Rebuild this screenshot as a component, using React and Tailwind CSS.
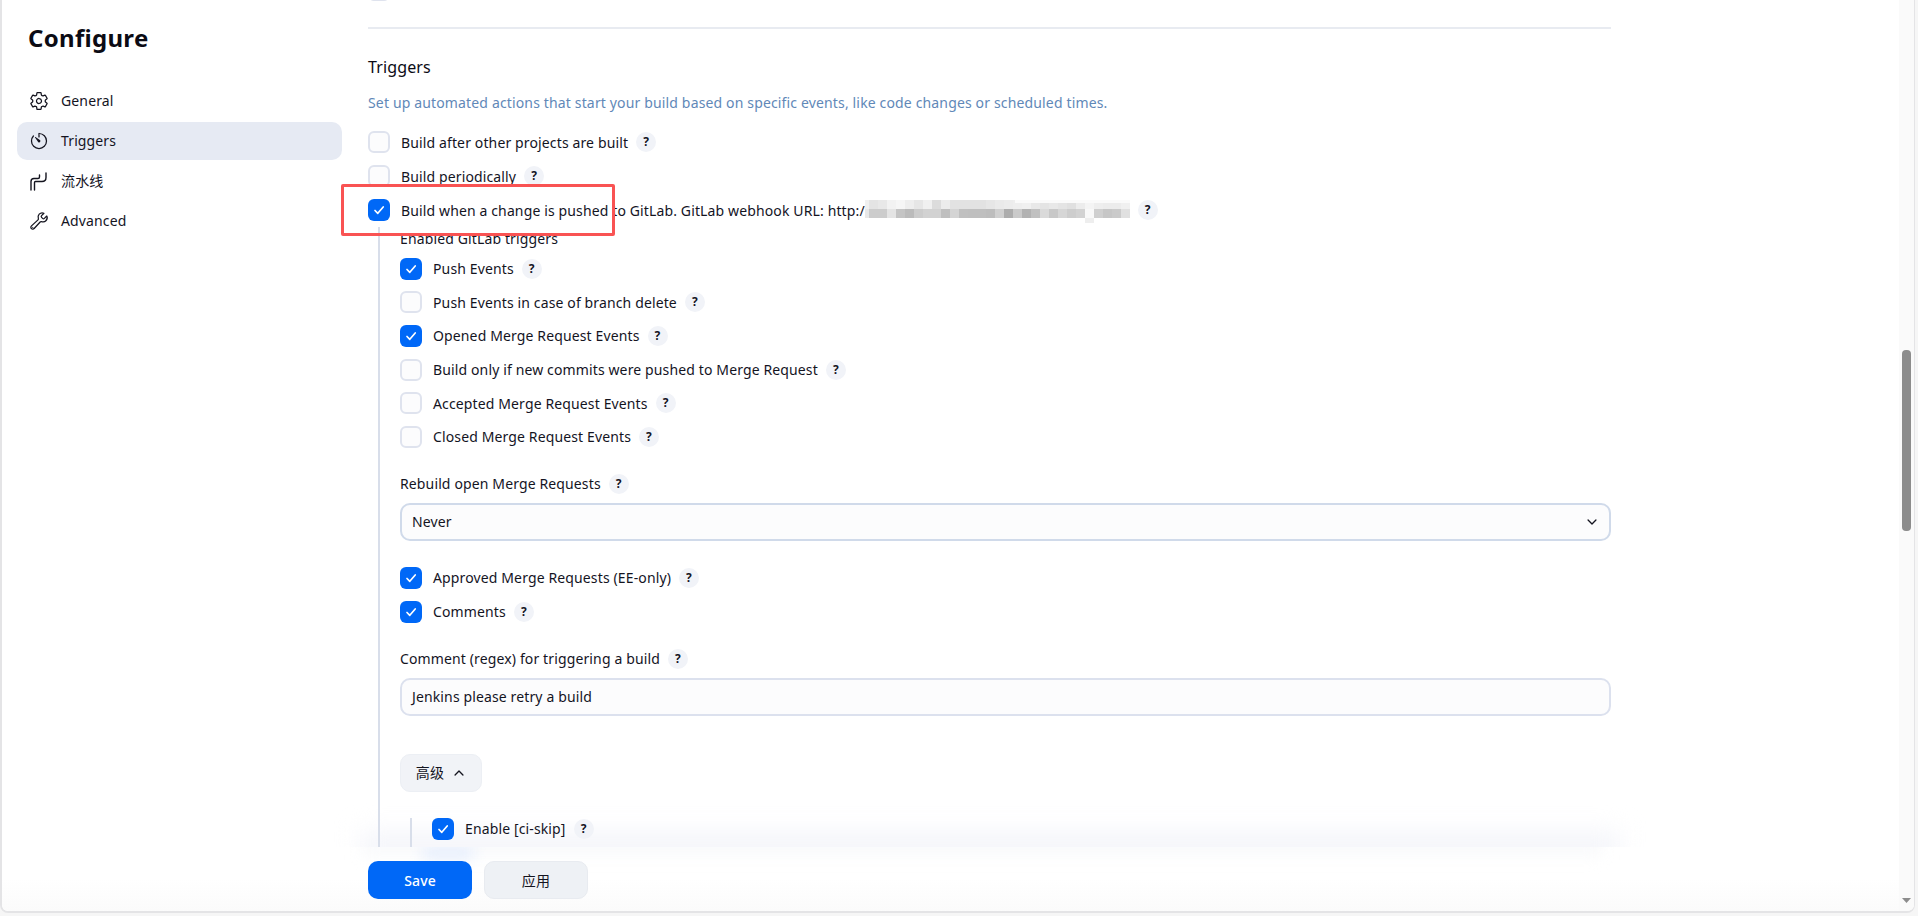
import { IoSettingsOutline, IoTimerOutline, IoBuildOutline, IoChevronDown, IoChevronUp } from "react-icons/io5";

const FONT = "font-['Noto_Sans','Noto_Sans_CJK_SC',sans-serif]";

const mosaic = [
  ["#f0f0f0", "#e4e4e4", "#e8e8e8", "#f2f2f2", "#f6f6f6", "#eeeeee", "#e6e6e6", "#f0f0f0", "#dcdcdc", "#ececec", "#e2e2e2", "#e2e2e2", "#e2e2e2", "#e2e2e2", "#e6e6e6", "#eaeaea", "#ececec", "#eeeeee", "#f0f0f0", "#e8e8e8", "#e4e4e4", "#e8e8e8", "#e4e4e4", "#e0e0e0", "#ececec", "#f4f4f4", "#eeeeee", "#ececec", "#ececec", "#f0f0f0"],
  ["#e8e8e8", "#cccccc", "#cccccc", "#e4e4e4", "#c4c4c4", "#bbbbbb", "#cccccc", "#d2d2d2", "#d2d2d2", "#bfbfbf", "#d4d4d4", "#c0c0c0", "#bfbfbf", "#bfbfbf", "#bdbdbd", "#d0d0d0", "#adadad", "#cacaca", "#b2b2b2", "#c0c0c0", "#dadada", "#c8c8c8", "#d6d6d6", "#cdcdcd", "#d2d2d2", "#f8f8f8", "#cfcfcf", "#c6c6c6", "#cacaca", "#e0e0e0"],
];

function Check() {
  return (
    <svg viewBox="0 0 22 22" className="w-[22px] h-[22px]">
      <path d="M7 11.5l2.8 2.8L15.2 8" fill="none" stroke="white" strokeWidth="1.7" strokeLinecap="round" strokeLinejoin="round" />
    </svg>
  );
}

function Box({ on }) {
  if (on) {
    return (
      <span className="block w-[22px] h-[22px] shrink-0 rounded-[6px] bg-[#0068f7]">
        <Check />
      </span>
    );
  }
  return <span className="block w-[22px] h-[22px] shrink-0 rounded-[6px] border-2 border-[#dfe3ee] bg-[#fcfcfd]" />;
}

function Help() {
  return (
    <span className="ml-2 w-5 h-5 shrink-0 rounded-full bg-[#f1f3f8] flex items-center justify-center text-[12px] font-bold text-[#14141f]">
      ?
    </span>
  );
}

function Row({ on, label, className = "h-[33.6px]" }) {
  return (
    <div className={`flex items-center ${className}`}>
      <Box on={on} />
      <span className="ml-[11px] whitespace-nowrap">{label}</span>
      <Help />
    </div>
  );
}

function Label({ text, className }) {
  return (
    <div className={`flex items-center h-5 ${className}`}>
      <span>{text}</span>
      <Help />
    </div>
  );
}

function PipelineIcon() {
  return (
    <svg viewBox="0 0 20 20" className="w-5 h-5" fill="none" stroke="#14141f" strokeWidth="1.4" strokeLinecap="round">
      <path d="M2 19v-8.5C2 8.6 3.4 7.5 5 7.5h4c1 0 1.5-.6 1.5-1.5V4" />
      <path d="M5.5 19v-7.5c0-.6.4-1 1-1H13c2.6 0 4-1.5 4-4V2" />
    </svg>
  );
}

function NavItem({ icon, label, active }) {
  return (
    <div className={`flex items-center h-[38px] px-3 rounded-[10px] ${active ? "bg-[#e6eaf3]" : ""}`}>
      <span className="w-5 h-5 flex items-center justify-center text-[22px] text-[#14141f]">{icon}</span>
      <span className="ml-3 pb-[2px]">{label}</span>
    </div>
  );
}

export default function App() {
  return (
    <div className={`h-[916px] w-[1918px] overflow-hidden bg-[#f6f6f6] text-[14px] tracking-[0.13px] text-[#14141f] ${FONT}`}>
      <div className="relative flex h-[913px] w-[1915px] overflow-hidden rounded-b-[8px] border-l-2 border-b-2 border-r-1 border-[#e4e4e6] bg-white">

        {/* Sidebar */}
        <aside className="w-[366px] shrink-0 pl-[15px] pr-[26px]">
          <h1 className="mt-[21px] ml-[11px] text-[24px] leading-[34px] font-bold tracking-[0.3px] text-[#0b0b14]">Configure</h1>
          <nav className="mt-[27px] flex flex-col gap-[2px]">
            <NavItem icon={<IoSettingsOutline />} label="General" />
            <NavItem icon={<IoTimerOutline />} label="Triggers" active />
            <NavItem icon={<PipelineIcon />} label="流水线" />
            <NavItem icon={<IoBuildOutline />} label="Advanced" />
          </nav>
        </aside>

        {/* Soft shadow the save bar throws over the form */}
        <div className="absolute left-[358px] top-[832px] w-[1260px] h-[30px] bg-[#f4f5fa] blur-[12px]" />

        {/* Form */}
        <main className="relative w-[1243px] shrink-0 -mt-[21px]">
          <Box />
          <div className="mt-[26px] h-[2px] bg-[#e8ebf1]" />
          <h2 className="mt-[26px] text-[16px] leading-[24px] text-[#0b0b14]">Triggers</h2>
          <p className="mt-[14px] leading-[20px] tracking-[0.15px] text-[#6188b8] whitespace-nowrap">
            Set up automated actions that start your build based on specific events, like code changes or scheduled times.
          </p>

          <div className="mt-[12px]">
            <Row label="Build after other projects are built" className="h-[34px]" />
            <Row label="Build periodically" className="h-[34px]" />
            <div className="flex items-center h-[34px]">
              <Box on />
              <span className="ml-[11px] whitespace-nowrap">Build when a change is pushed to GitLab. GitLab webhook URL: http:/</span>
              <svg width="265" height="24" className="shrink-0 mt-[4px]">
                {mosaic.map((row, y) =>
                  row.map((fill, x) => (
                    <rect key={`${x}-${y}`} x={x * 9 - 5} y={y * 9} width="9" height="9" fill={fill} />
                  ))
                )}
                <rect x="150" y="0" width="115" height="3" fill="#fafafa" />
                <rect x="220" y="18" width="9" height="5" fill="#eeeeee" />
              </svg>
              <Help />
            </div>
          </div>

          {/* GitLab options */}
          <div className="ml-[10px] border-l-2 border-[#d8deea] pl-[20px]">
            <div className="pt-[2px] leading-[20px]">Enabled GitLab triggers</div>
            <div className="mt-[3px]">
              <Row on label="Push Events" />
              <Row label="Push Events in case of branch delete" />
              <Row on label="Opened Merge Request Events" />
              <Row label="Build only if new commits were pushed to Merge Request" />
              <Row label="Accepted Merge Request Events" />
              <Row label="Closed Merge Request Events" />
            </div>

            <Label text="Rebuild open Merge Requests" className="mt-[20px]" />
            <div className="mt-[9px] h-[38px] rounded-[10px] border-2 border-[#d0daea] bg-[#fcfcfd] pl-[10px] pr-[10px] flex items-center justify-between">
              <span>Never</span>
              <IoChevronDown className="text-[14px]" />
            </div>

            <div className="mt-[20px]">
              <Row on label="Approved Merge Requests (EE-only)" className="h-[34px]" />
              <Row on label="Comments" className="h-[34px]" />
            </div>

            <Label text="Comment (regex) for triggering a build" className="mt-[20px]" />
            <div className="mt-[9px] h-[38px] rounded-[10px] border-2 border-[#dce1ee] bg-[#fcfcfd] pl-[10px] flex items-center">
              Jenkins please retry a build
            </div>

            <button className="mt-[38px] h-[38px] w-[82px] rounded-[10px] bg-[#f1f3f7] border border-[#eceff4] flex items-center justify-center gap-2">
              <span>高级</span>
              <IoChevronUp className="text-[14px]" />
            </button>

            <div className="mt-[26px] ml-[10px] border-l-2 border-[#d8deea] pl-[20px] h-[200px]">
              <div className="flex items-center h-[22px]">
                <Box on />
                <span className="ml-[11px]">Enable [ci-skip]</span>
                <Help />
              </div>
            </div>
          </div>
        </main>

        {/* Scrollbar */}
        <div className="ml-auto w-[15px] shrink-0 bg-[#fafafa] flex flex-col items-center pt-[350px] pb-[8px]">
          <div className="w-[9px] h-[181px] rounded-[4px] bg-[#8c8c8c]" />
          <svg width="9" height="5" className="mt-auto">
            <path d="M0 0h9L4.5 5z" fill="#8c8c8c" />
          </svg>
        </div>

        {/* Sticky save bar */}
        <div className="absolute left-0 right-[15px] top-[847px] bottom-0 overflow-hidden bg-gradient-to-b from-white via-white to-[#fbfbfb] flex items-start gap-3 pl-[366px] pt-[14px]">
          <div className="absolute left-[360px] w-[1240px] -top-[8px] h-[16px] bg-[#f8f9fb] blur-[8px]" />
          <div className="absolute left-[421px] top-0 w-[50px] h-[12px] bg-[#e4edfd] blur-[7px]" />
          <button className="relative w-[104px] h-[38px] rounded-[10px] bg-[#0068f7] text-white font-medium">Save</button>
          <button className="relative w-[104px] h-[38px] rounded-[10px] bg-[#eef1f5] border border-[#e8ebf0]">应用</button>
        </div>

        {/* Annotation */}
        <div className="absolute left-[339px] top-[184px] w-[274px] h-[52px] rounded-[2px] border-[3.5px] border-[#f95353]" />
      </div>
    </div>
  );
}
